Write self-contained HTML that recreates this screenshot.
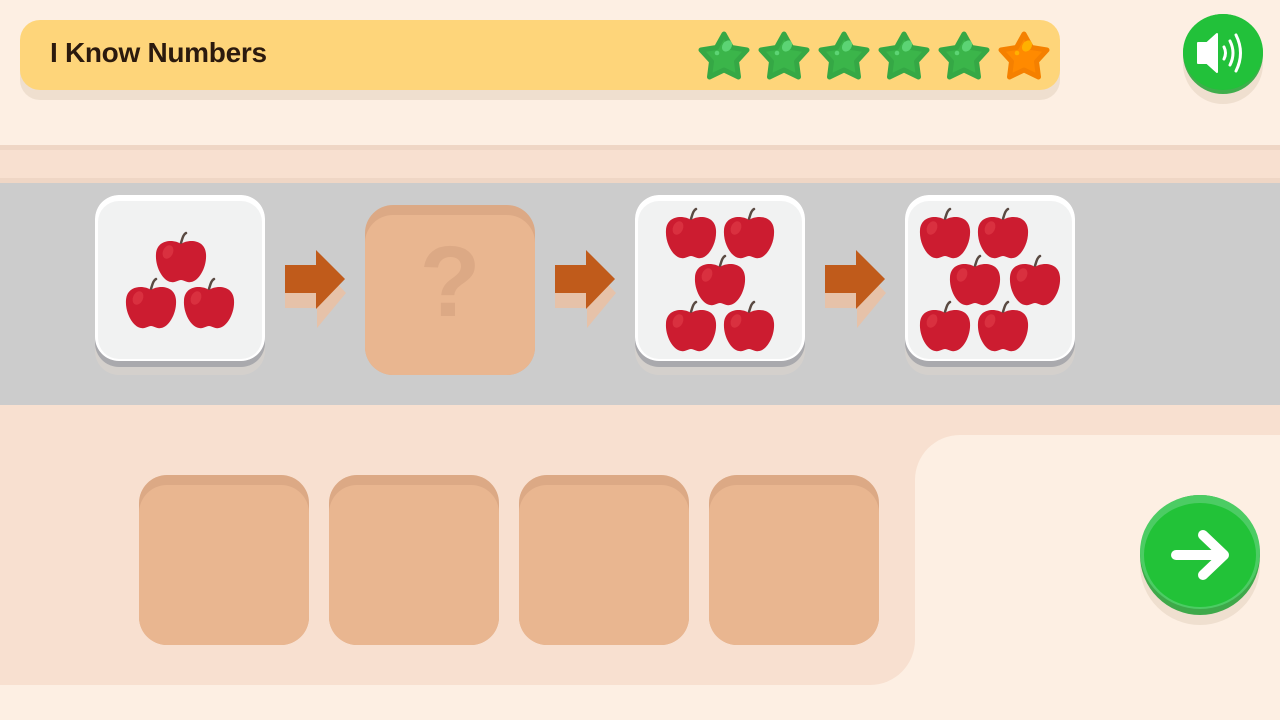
<!DOCTYPE html>
<html><head><meta charset="utf-8"><style>
*{margin:0;padding:0;box-sizing:border-box}
body{width:1280px;height:720px;background:#fdefe3;position:relative;overflow:hidden;font-family:"Liberation Sans",sans-serif}
.a{position:absolute}
.card{position:absolute;width:170px;height:180px;border-radius:24px;background:#d4d0cc}
.card .in{position:absolute;left:0;top:0;width:170px;height:172px;border-radius:24px;background:#a9a9ad}
.card .face{position:absolute;left:0;top:0;width:170px;height:166px;border-radius:24px;background:#fff}
.card .face2{position:absolute;left:3px;top:6px;width:164px;height:158px;border-radius:21px;background:#f1f2f2}
.slot{position:absolute;width:170px;height:170px;border-radius:28px;background:#dca985}
.slot div{position:absolute;left:0;top:10px;width:170px;height:160px;border-radius:28px;background:#e9b690}
.ap{position:absolute;width:54px;height:54px}
</style></head><body>
<svg width="0" height="0" style="position:absolute"><defs>
<symbol id="apple" viewBox="0 0 54 54">
<path d="M27 13 C29 6 30 4 32 3" stroke="#5a4a42" stroke-width="2.5" fill="none" stroke-linecap="round"/>
<path d="M27 14 C20 9 3 9 2 24 C1 37 9 51 17 52 C21 53 24 50 27 50 C30 50 33 53 37 52 C45 51 53 37 52 24 C51 9 34 9 27 14Z" fill="#cc1c30"/>
<ellipse cx="14" cy="22" rx="5" ry="7" fill="#d9303f" transform="rotate(25 14 22)"/>
</symbol>
<symbol id="star" viewBox="0 0 54 54">
<path d="M27 5 L34.5 18.5 L50 21 L39.5 32.5 L41.5 48 L27 41 L12.5 48 L14.5 32.5 L4 21 L19.5 18.5Z" stroke-linejoin="round" stroke-width="5"/>
</symbol>
</defs></svg>

<!-- header -->
<div class="a" style="left:20px;top:28px;width:1040px;height:72px;border-radius:20px;background:#efdfcf"></div>
<div class="a" style="left:20px;top:20px;width:1040px;height:70px;border-radius:20px;background:#fed57a"></div>
<div class="a" style="left:50px;top:37px;font-size:28px;font-weight:bold;color:#2b1a0e;letter-spacing:-0.3px">I Know Numbers</div>
<svg class="a" style="left:697px;top:29px" width="360" height="54">
<g fill="#3bb54a" stroke="#35a845">
<use href="#star" x="0" y="0" width="54" height="54"/>
<use href="#star" x="60" y="0" width="54" height="54"/>
<use href="#star" x="120" y="0" width="54" height="54"/>
<use href="#star" x="180" y="0" width="54" height="54"/>
<use href="#star" x="240" y="0" width="54" height="54"/>
</g>
<use href="#star" x="300" y="0" width="54" height="54" fill="#ff8a00" stroke="#f58000"/>
<g fill="#5cd474">
<ellipse cx="30" cy="17" rx="4.5" ry="6" transform="rotate(35 30 17)"/><circle cx="20" cy="24" r="2.3"/>
<ellipse cx="90" cy="17" rx="4.5" ry="6" transform="rotate(35 90 17)"/><circle cx="80" cy="24" r="2.3"/>
<ellipse cx="150" cy="17" rx="4.5" ry="6" transform="rotate(35 150 17)"/><circle cx="140" cy="24" r="2.3"/>
<ellipse cx="210" cy="17" rx="4.5" ry="6" transform="rotate(35 210 17)"/><circle cx="200" cy="24" r="2.3"/>
<ellipse cx="270" cy="17" rx="4.5" ry="6" transform="rotate(35 270 17)"/><circle cx="260" cy="24" r="2.3"/>
</g>
<g fill="#ffb000"><ellipse cx="330" cy="17" rx="4.5" ry="6" transform="rotate(35 330 17)"/><circle cx="320" cy="24" r="2.3"/></g>
</svg>
<!-- sound -->
<div class="a" style="left:1183px;top:24px;width:80px;height:80px;border-radius:50%;background:#efdfcf"></div>
<div class="a" style="left:1183px;top:14px;width:80px;height:80px;border-radius:50%;background:#3fae4c"></div>
<div class="a" style="left:1183px;top:14px;width:80px;height:76px;border-radius:50%;background:#22c13a"></div>
<svg class="a" style="left:1195px;top:30px" width="56" height="46" viewBox="0 0 56 46">
<path d="M3 13 H12 L22 4 V42 L12 33 H3Z" fill="#fff" stroke="#fff" stroke-linejoin="round" stroke-width="2"/>
<path d="M29 17 Q32 23 29 29" stroke="#fff" stroke-width="3" fill="none" stroke-linecap="round"/>
<path d="M35 11 Q41 23 35 35" stroke="#fff" stroke-width="3" fill="none" stroke-linecap="round"/>
<path d="M41 5 Q50 23 41 41" stroke="#fff" stroke-width="3" fill="none" stroke-linecap="round"/>
</svg>

<!-- bands -->
<div class="a" style="left:0;top:145px;width:1280px;height:40px;background:#efd6c5"></div>
<div class="a" style="left:0;top:150px;width:1280px;height:28px;background:#f8e0d0"></div>
<div class="a" style="left:0;top:183px;width:1280px;height:222px;background:#cccccc"></div>

<!-- cards -->
<div class="card" style="left:95px;top:195px"><div class="in"></div><div class="face"></div><div class="face2"></div></div>
<div class="card" style="left:635px;top:195px"><div class="in"></div><div class="face"></div><div class="face2"></div></div>
<div class="card" style="left:905px;top:195px"><div class="in"></div><div class="face"></div><div class="face2"></div></div>

<svg class="ap" style="left:154px;top:230px"><use href="#apple"/></svg>
<svg class="ap" style="left:124px;top:276px"><use href="#apple"/></svg>
<svg class="ap" style="left:182px;top:276px"><use href="#apple"/></svg>

<svg class="ap" style="left:664px;top:206px"><use href="#apple"/></svg>
<svg class="ap" style="left:722px;top:206px"><use href="#apple"/></svg>
<svg class="ap" style="left:693px;top:253px"><use href="#apple"/></svg>
<svg class="ap" style="left:664px;top:299px"><use href="#apple"/></svg>
<svg class="ap" style="left:722px;top:299px"><use href="#apple"/></svg>

<svg class="ap" style="left:918px;top:206px"><use href="#apple"/></svg>
<svg class="ap" style="left:976px;top:206px"><use href="#apple"/></svg>
<svg class="ap" style="left:948px;top:253px"><use href="#apple"/></svg>
<svg class="ap" style="left:1008px;top:253px"><use href="#apple"/></svg>
<svg class="ap" style="left:918px;top:299px"><use href="#apple"/></svg>
<svg class="ap" style="left:976px;top:299px"><use href="#apple"/></svg>

<!-- question slot -->
<div class="slot" style="left:365px;top:205px"><div></div></div>
<div class="a" style="left:365px;top:232px;width:170px;text-align:center;font-size:100px;font-weight:bold;color:#dca985;line-height:100px">?</div>

<!-- arrows -->
<svg class="a" style="left:284px;top:249px" width="64" height="80" viewBox="0 0 64 80">
<path d="M1 16 H33 V-4 L62 27 L33 62 V42 H1Z" fill="#e6c2a9" transform="translate(0,17)"/>
<path d="M1 16 H32 V1 L61 30 L32 60 V44 H1Z" fill="#c05b1b"/>
</svg>
<svg class="a" style="left:554px;top:249px" width="64" height="80" viewBox="0 0 64 80">
<path d="M1 16 H33 V-4 L62 27 L33 62 V42 H1Z" fill="#e6c2a9" transform="translate(0,17)"/>
<path d="M1 16 H32 V1 L61 30 L32 60 V44 H1Z" fill="#c05b1b"/>
</svg>
<svg class="a" style="left:824px;top:249px" width="64" height="80" viewBox="0 0 64 80">
<path d="M1 16 H33 V-4 L62 27 L33 62 V42 H1Z" fill="#e6c2a9" transform="translate(0,17)"/>
<path d="M1 16 H32 V1 L61 30 L32 60 V44 H1Z" fill="#c05b1b"/>
</svg>

<!-- lower area -->
<div class="a" style="left:0;top:405px;width:1280px;height:280px;background:#f8e0d0"></div>
<div class="a" style="left:0;top:685px;width:1280px;height:35px;background:#fdefe3"></div>
<div class="a" style="left:870px;top:640px;width:45px;height:45px;background:#fdefe3"></div>
<div class="a" style="left:825px;top:595px;width:90px;height:90px;border-bottom-right-radius:45px;background:#f8e0d0"></div>
<div class="a" style="left:915px;top:435px;width:365px;height:285px;background:#fdefe3;border-top-left-radius:45px"></div>

<div class="slot" style="left:139px;top:475px"><div></div></div>
<div class="slot" style="left:329px;top:475px"><div></div></div>
<div class="slot" style="left:519px;top:475px"><div></div></div>
<div class="slot" style="left:709px;top:475px"><div></div></div>

<!-- next -->
<div class="a" style="left:1140px;top:505px;width:120px;height:120px;border-radius:50%;background:#efdfcf"></div>
<div class="a" style="left:1140px;top:495px;width:120px;height:120px;border-radius:50%;background:#3ea94a"></div>
<div class="a" style="left:1140px;top:495px;width:120px;height:114px;border-radius:50%;background:#4ccc64"></div>
<div class="a" style="left:1144px;top:503px;width:112px;height:104px;border-radius:50%;background:#22c238"></div>
<svg class="a" style="left:1168px;top:527px" width="66" height="56" viewBox="0 0 66 56">
<path d="M8 28 H56 M35 8 L56 28 L35 48" stroke="#fff" stroke-width="10" fill="none" stroke-linecap="round" stroke-linejoin="round"/>
</svg>
</body></html>
